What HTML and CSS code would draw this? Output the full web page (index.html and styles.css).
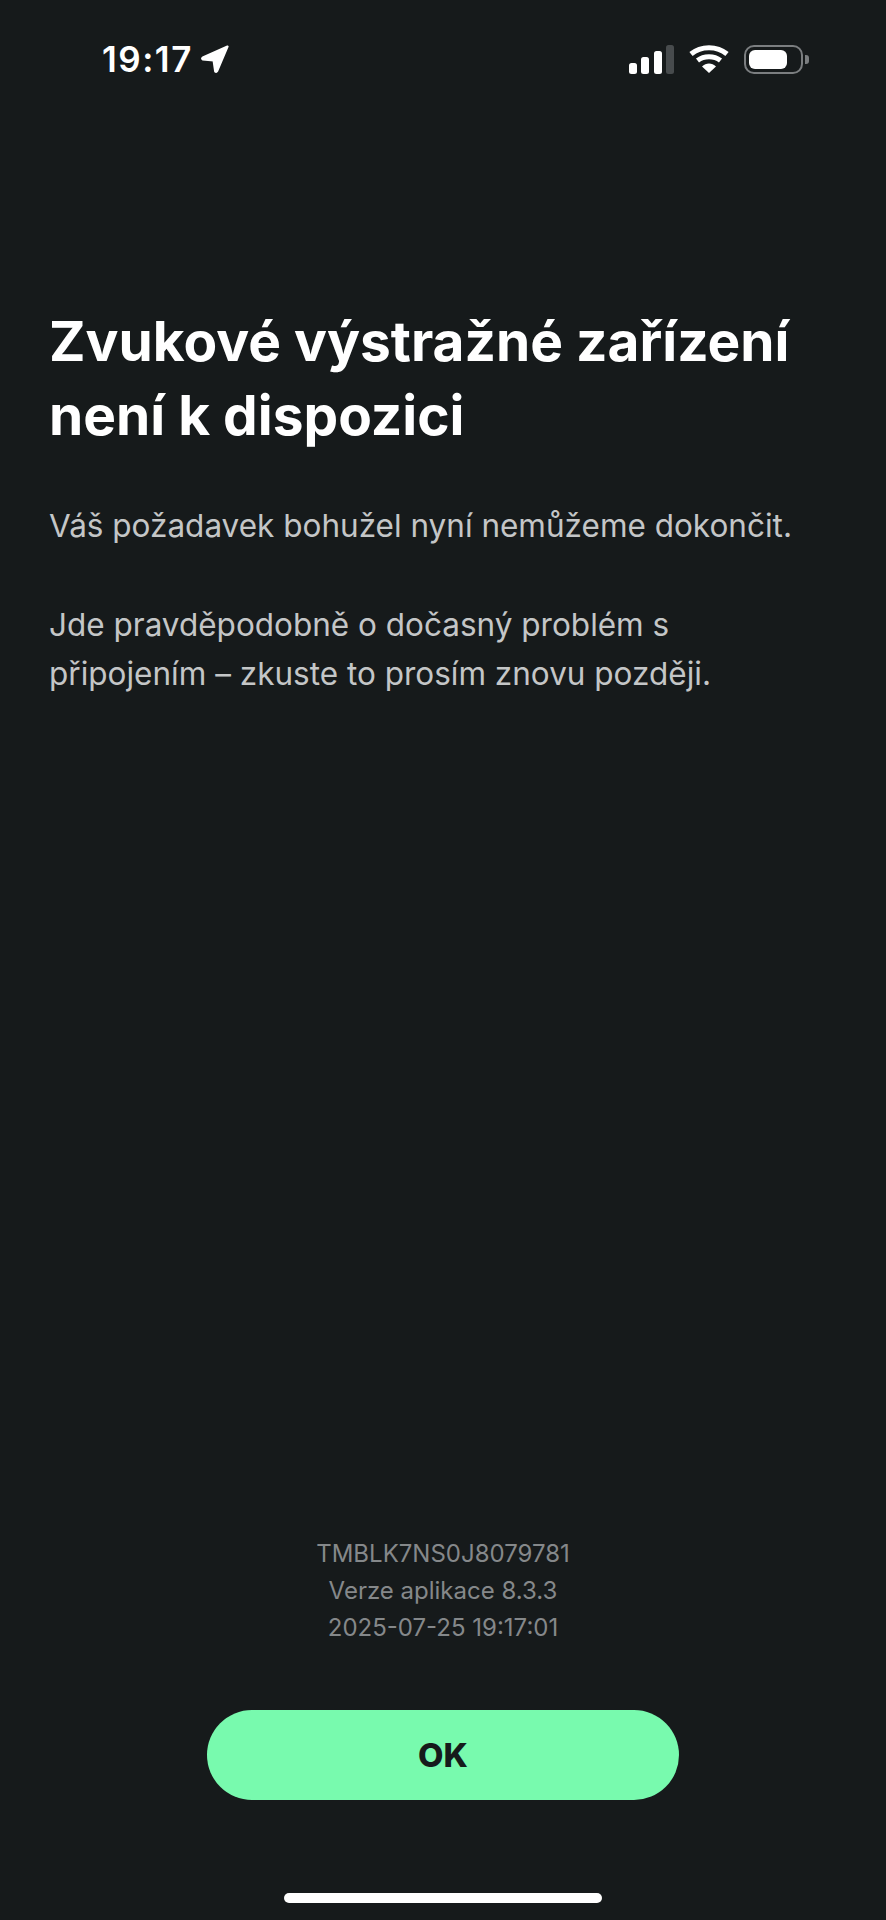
FILE: index.html
```html
<!DOCTYPE html>
<html lang="cs">
<head>
    <meta charset="UTF-8">
    <meta name="viewport" content="width=device-width, initial-scale=1.0">
    <title>Zvukové výstražné zařízení</title>
    <link rel="stylesheet" href="styles.css">
</head>
<body>
    <div class="screen">
        <div class="status-bar">
            <div class="status-left">
                <span class="clock">19:17</span>
                <svg class="location" width="28" height="28" viewBox="0 0 28 28">
                    <path d="M26.5 1.5 L1.8 12.6 Q0.6 13.4 1.6 14.3 L12.6 15.4 L14.2 26.4 Q15.2 27.4 16 26.2 Z" fill="#fff" stroke="#fff" stroke-width="2.2" stroke-linejoin="round"/>
                </svg>
            </div>
            <div class="status-right">
                <svg class="signal" width="45" height="29" viewBox="0 0 45 29">
                    <rect x="0" y="18" width="8" height="11" rx="2.5" fill="#fff"/>
                    <rect x="12" y="12" width="8" height="17" rx="2.5" fill="#fff"/>
                    <rect x="25" y="6" width="8" height="23" rx="2.5" fill="#fff"/>
                    <rect x="37" y="0" width="8" height="29" rx="2.5" fill="#474b4d"/>
                </svg>
                <svg class="wifi" width="40" height="28" viewBox="0 0 40 28">
                    <path d="M2 9 C12 0.5 28 0.5 38 9" fill="none" stroke="#fff" stroke-width="5"/>
                    <path d="M8.5 15.5 C15 10.5 25 10.5 31.5 15.5" fill="none" stroke="#fff" stroke-width="5"/>
                    <path d="M13 21.5 L20 28 L27 21.5 C23 17.5 17 17.5 13 21.5 Z" fill="#fff"/>
                </svg>
                <div class="battery">
                    <div class="battery-body"><div class="battery-level"></div></div>
                    <div class="battery-cap"></div>
                </div>
            </div>
        </div>

        <div class="message">
            <h1>Zvukové výstražné zařízení není k dispozici</h1>
            <p>Váš požadavek bohužel nyní nemůžeme dokončit.</p>
            <p>Jde pravděpodobně o dočasný problém s připojením – zkuste to prosím znovu později.</p>
        </div>

        <div class="footer">
            <div class="meta">
                <div>TMBLK7NS0J8079781</div>
                <div>Verze aplikace 8.3.3</div>
                <div>2025-07-25 19:17:01</div>
            </div>
            <button type="button" class="ok-button">OK</button>
            <div class="home-bar"></div>
        </div>
    </div>
</body>
</html>
```

FILE: styles.css
```css
html, body {
    margin: 0;
    padding: 0;
}
body {
    font-family: 'Inter', sans-serif;
    background-color: #161A1B;
    color: #fff;
}
.screen {
    width: 886px;
    height: 1920px;
    display: flex;
    flex-direction: column;
    box-sizing: border-box;
}
.status-bar {
    display: flex;
    justify-content: space-between;
    align-items: center;
    height: 30px;
    margin-top: 44px;
    padding: 0 77px 0 102px;
}
.status-left {
    display: flex;
    align-items: center;
    gap: 8px;
}
.clock {
    font-size: 35px;
    font-weight: 600;
    letter-spacing: 1.5px;
}
.status-right {
    display: flex;
    align-items: center;
    gap: 15px;
}
.battery {
    display: flex;
    align-items: center;
    gap: 2px;
}
.battery-body {
    width: 59px;
    height: 29px;
    box-sizing: border-box;
    border: 2px solid #7b7e80;
    border-radius: 10px;
    padding: 3px;
}
.battery-level {
    width: 38px;
    height: 100%;
    background-color: #fff;
    border-radius: 6px;
}
.battery-cap {
    width: 4px;
    height: 9px;
    background-color: #7b7e80;
    border-radius: 0 3px 3px 0;
}
.message {
    flex: 1;
    padding: 230px 60px 0 49px;
}
h1 {
    margin: 0 0 49px;
    font-size: 55px;
    line-height: 74px;
    font-weight: 700;
}
.message p {
    margin: 0 0 50px;
    font-size: 31.5px;
    line-height: 49px;
    color: #c4c6c7;
}
.footer {
    display: flex;
    flex-direction: column;
    align-items: center;
    padding-bottom: 17px;
}
.meta {
    font-size: 24px;
    line-height: 37px;
    text-align: center;
    color: #85888a;
}
.ok-button {
    width: 472px;
    height: 90px;
    margin-top: 64px;
    border: none;
    border-radius: 45px;
    background-color: #78FAAE;
    color: #161A1B;
    font-family: 'Inter', sans-serif;
    font-size: 33px;
    font-weight: 800;
}
.home-bar {
    width: 318px;
    height: 10px;
    margin-top: 93px;
    background-color: #fff;
    border-radius: 5px;
}
```
